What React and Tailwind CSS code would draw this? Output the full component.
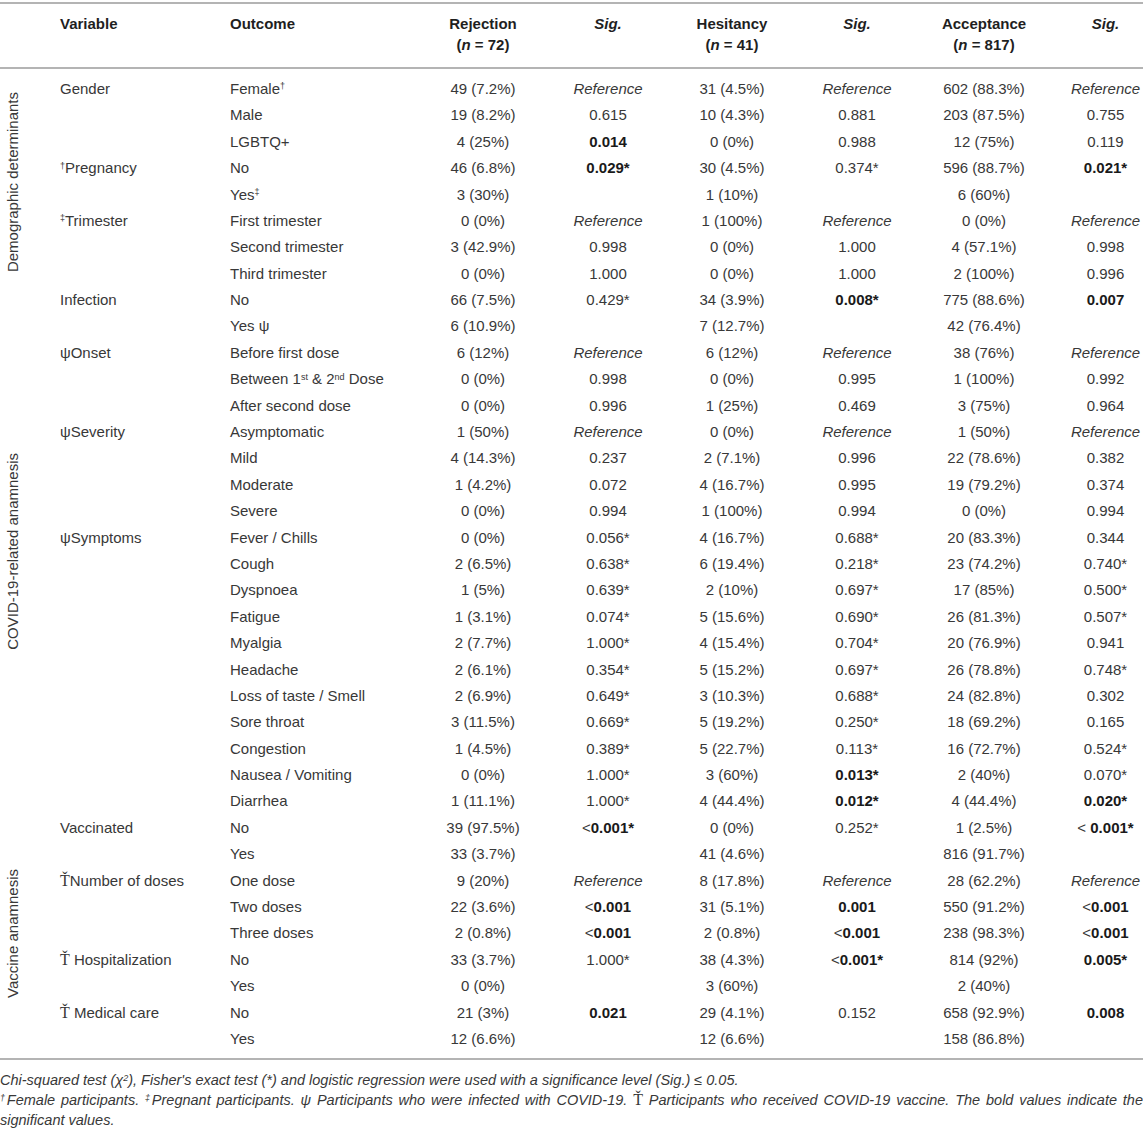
const rows = [
  ["Gender", "Female|†", "49 (7.2%)", "R", "31 (4.5%)", "R", "602 (88.3%)", "R"],
  ["", "Male", "19 (8.2%)", "0.615", "10 (4.3%)", "0.881", "203 (87.5%)", "0.755"],
  ["", "LGBTQ+", "4 (25%)", "!0.014", "0 (0%)", "0.988", "12 (75%)", "0.119"],
  ["†|Pregnancy", "No", "46 (6.8%)", "!0.029*", "30 (4.5%)", "0.374*", "596 (88.7%)", "!0.021*"],
  ["", "Yes|‡", "3 (30%)", "", "1 (10%)", "", "6 (60%)", ""],
  ["‡|Trimester", "First trimester", "0 (0%)", "R", "1 (100%)", "R", "0 (0%)", "R"],
  ["", "Second trimester", "3 (42.9%)", "0.998", "0 (0%)", "1.000", "4 (57.1%)", "0.998"],
  ["", "Third trimester", "0 (0%)", "1.000", "0 (0%)", "1.000", "2 (100%)", "0.996"],
  ["Infection", "No", "66 (7.5%)", "0.429*", "34 (3.9%)", "!0.008*", "775 (88.6%)", "!0.007"],
  ["", "Yes ψ", "6 (10.9%)", "", "7 (12.7%)", "", "42 (76.4%)", ""],
  ["ψOnset", "Before first dose", "6 (12%)", "R", "6 (12%)", "R", "38 (76%)", "R"],
  ["", "DOSE", "0 (0%)", "0.998", "0 (0%)", "0.995", "1 (100%)", "0.992"],
  ["", "After second dose", "0 (0%)", "0.996", "1 (25%)", "0.469", "3 (75%)", "0.964"],
  ["ψSeverity", "Asymptomatic", "1 (50%)", "R", "0 (0%)", "R", "1 (50%)", "R"],
  ["", "Mild", "4 (14.3%)", "0.237", "2 (7.1%)", "0.996", "22 (78.6%)", "0.382"],
  ["", "Moderate", "1 (4.2%)", "0.072", "4 (16.7%)", "0.995", "19 (79.2%)", "0.374"],
  ["", "Severe", "0 (0%)", "0.994", "1 (100%)", "0.994", "0 (0%)", "0.994"],
  ["ψSymptoms", "Fever / Chills", "0 (0%)", "0.056*", "4 (16.7%)", "0.688*", "20 (83.3%)", "0.344"],
  ["", "Cough", "2 (6.5%)", "0.638*", "6 (19.4%)", "0.218*", "23 (74.2%)", "0.740*"],
  ["", "Dyspnoea", "1 (5%)", "0.639*", "2 (10%)", "0.697*", "17 (85%)", "0.500*"],
  ["", "Fatigue", "1 (3.1%)", "0.074*", "5 (15.6%)", "0.690*", "26 (81.3%)", "0.507*"],
  ["", "Myalgia", "2 (7.7%)", "1.000*", "4 (15.4%)", "0.704*", "20 (76.9%)", "0.941"],
  ["", "Headache", "2 (6.1%)", "0.354*", "5 (15.2%)", "0.697*", "26 (78.8%)", "0.748*"],
  ["", "Loss of taste / Smell", "2 (6.9%)", "0.649*", "3 (10.3%)", "0.688*", "24 (82.8%)", "0.302"],
  ["", "Sore throat", "3 (11.5%)", "0.669*", "5 (19.2%)", "0.250*", "18 (69.2%)", "0.165"],
  ["", "Congestion", "1 (4.5%)", "0.389*", "5 (22.7%)", "0.113*", "16 (72.7%)", "0.524*"],
  ["", "Nausea / Vomiting", "0 (0%)", "1.000*", "3 (60%)", "!0.013*", "2 (40%)", "0.070*"],
  ["", "Diarrhea", "1 (11.1%)", "1.000*", "4 (44.4%)", "!0.012*", "4 (44.4%)", "!0.020*"],
  ["Vaccinated", "No", "39 (97.5%)", "!<0.001*", "0 (0%)", "0.252*", "1 (2.5%)", "!< 0.001*"],
  ["", "Yes", "33 (3.7%)", "", "41 (4.6%)", "", "816 (91.7%)", ""],
  ["T|Number of doses", "One dose", "9 (20%)", "R", "8 (17.8%)", "R", "28 (62.2%)", "R"],
  ["", "Two doses", "22 (3.6%)", "!<0.001", "31 (5.1%)", "!0.001", "550 (91.2%)", "!<0.001"],
  ["", "Three doses", "2 (0.8%)", "!<0.001", "2 (0.8%)", "!<0.001", "238 (98.3%)", "!<0.001"],
  ["T| Hospitalization", "No", "33 (3.7%)", "1.000*", "38 (4.3%)", "!<0.001*", "814 (92%)", "!0.005*"],
  ["", "Yes", "0 (0%)", "", "3 (60%)", "", "2 (40%)", ""],
  ["T| Medical care", "No", "21 (3%)", "!0.021", "29 (4.1%)", "0.152", "658 (92.9%)", "!0.008"],
  ["", "Yes", "12 (6.6%)", "", "12 (6.6%)", "", "158 (86.8%)", ""],
];

const groups = [
  { label: "Demographic determinants", start: 1, span: 8 },
  { label: "COVID-19-related anamnesis", start: 9, span: 20 },
  { label: "Vaccine anamnesis", start: 29, span: 9 },
];

const cols = "grid grid-cols-[52px_170px_198px_126px_124px_124px_126px_128px_95px]";

function Sup({ children }) {
  return <sup className="text-[9px] leading-none">{children}</sup>;
}

function Vax() {
  return <span className="font-['Liberation_Serif','DejaVu_Serif',serif] text-[16px] leading-none not-italic">Ť</span>;
}

function Label({ text }) {
  if (!text) return null;
  if (text === "DOSE") {
    return (
      <span>
        Between 1<Sup>st</Sup> &amp; 2<Sup>nd</Sup> Dose
      </span>
    );
  }
  if (text.includes("|")) {
    const [a, b] = text.split("|");
    if (a === "T") return (<span><Vax />{b}</span>);
    if (a === "†" || a === "‡") return (<span><Sup>{a}</Sup>{b}</span>);
    return (<span>{a}<Sup>{b}</Sup></span>);
  }
  return <span>{text}</span>;
}

function Sig({ v }) {
  if (!v) return null;
  if (v === "R") return <span className="italic">Reference</span>;
  if (v.startsWith("!")) {
    const s = v.slice(1);
    if (s.startsWith("<")) {
      const rest = s.replace(/^<\s?/, "");
      return (
        <span>
          <span className="font-normal">{s.startsWith("< ") ? "< " : "<"}</span>
          <span className="font-bold text-[#1a1a1a]">{rest}</span>
        </span>
      );
    }
    return <span className="font-bold text-[#1a1a1a]">{s}</span>;
  }
  return <span>{v}</span>;
}

export default function App() {
  return (
    <div className="w-[1143px] bg-white pt-[2px] font-['Liberation_Sans',Arial,sans-serif] text-[15px] text-[#383838]">
      <div className="h-[2px] bg-[#b4b4b4]" />
      <div className={`${cols} pt-[9px] pb-[12px] font-bold leading-[21px] text-[#1f1f1f]`}>
        <div />
        <div className="pl-[8px]">Variable</div>
        <div className="pl-[8px]">Outcome</div>
        <div className="text-center">
          Rejection
          <br />(<span className="italic">n</span> = 72)
        </div>
        <div className="text-center italic">Sig.</div>
        <div className="text-center">
          Hesitancy
          <br />(<span className="italic">n</span> = 41)
        </div>
        <div className="text-center italic">Sig.</div>
        <div className="text-center">
          Acceptance
          <br />(<span className="italic">n</span> = 817)
        </div>
        <div className="pl-[20px] text-center italic">Sig.</div>
      </div>
      <div className="h-[2px] bg-[#b4b4b4]" />
      <div className={`${cols} auto-rows-[26.4px] pt-[7px] pb-[6px]`}>
        {groups.map((g) => (
          <div
            key={g.label}
            className="col-start-1 flex items-center pl-[2px]"
            style={{ gridRow: `${g.start} / span ${g.span}` }}
          >
            <span className="rotate-180 whitespace-nowrap [writing-mode:vertical-rl]">{g.label}</span>
          </div>
        ))}
        {rows.map((r, i) => (
          <div key={i} className="contents">
            <div className="col-start-2 flex items-center pl-[8px] whitespace-nowrap" style={{ gridRow: i + 1 }}>
              <Label text={r[0]} />
            </div>
            <div className="flex items-center pl-[8px] whitespace-nowrap" style={{ gridRow: i + 1 }}>
              <Label text={r[1]} />
            </div>
            <div className="flex items-center justify-center" style={{ gridRow: i + 1 }}>{r[2]}</div>
            <div className="flex items-center justify-center" style={{ gridRow: i + 1 }}><Sig v={r[3]} /></div>
            <div className="flex items-center justify-center" style={{ gridRow: i + 1 }}>{r[4]}</div>
            <div className="flex items-center justify-center" style={{ gridRow: i + 1 }}><Sig v={r[5]} /></div>
            <div className="flex items-center justify-center" style={{ gridRow: i + 1 }}>{r[6]}</div>
            <div className="flex items-center justify-center pl-[20px] whitespace-nowrap" style={{ gridRow: i + 1 }}><Sig v={r[7]} /></div>
          </div>
        ))}
      </div>
      <div className="h-[2px] bg-[#b4b4b4]" />
      <div className="pt-[10px] text-justify text-[14.5px] italic leading-[20px] text-[#383838]">
        <p>
          Chi-squared test (χ<Sup>2</Sup>), Fisher's exact test (*) and logistic regression were used with a significance level (Sig.) ≤ 0.05.
        </p>
        <p>
          <Sup>†</Sup>Female participants. <Sup>‡</Sup>Pregnant participants. ψ Participants who were infected with COVID-19. <Vax /> Participants who received COVID-19 vaccine. The bold values indicate the significant values.
        </p>
      </div>
    </div>
  );
}
